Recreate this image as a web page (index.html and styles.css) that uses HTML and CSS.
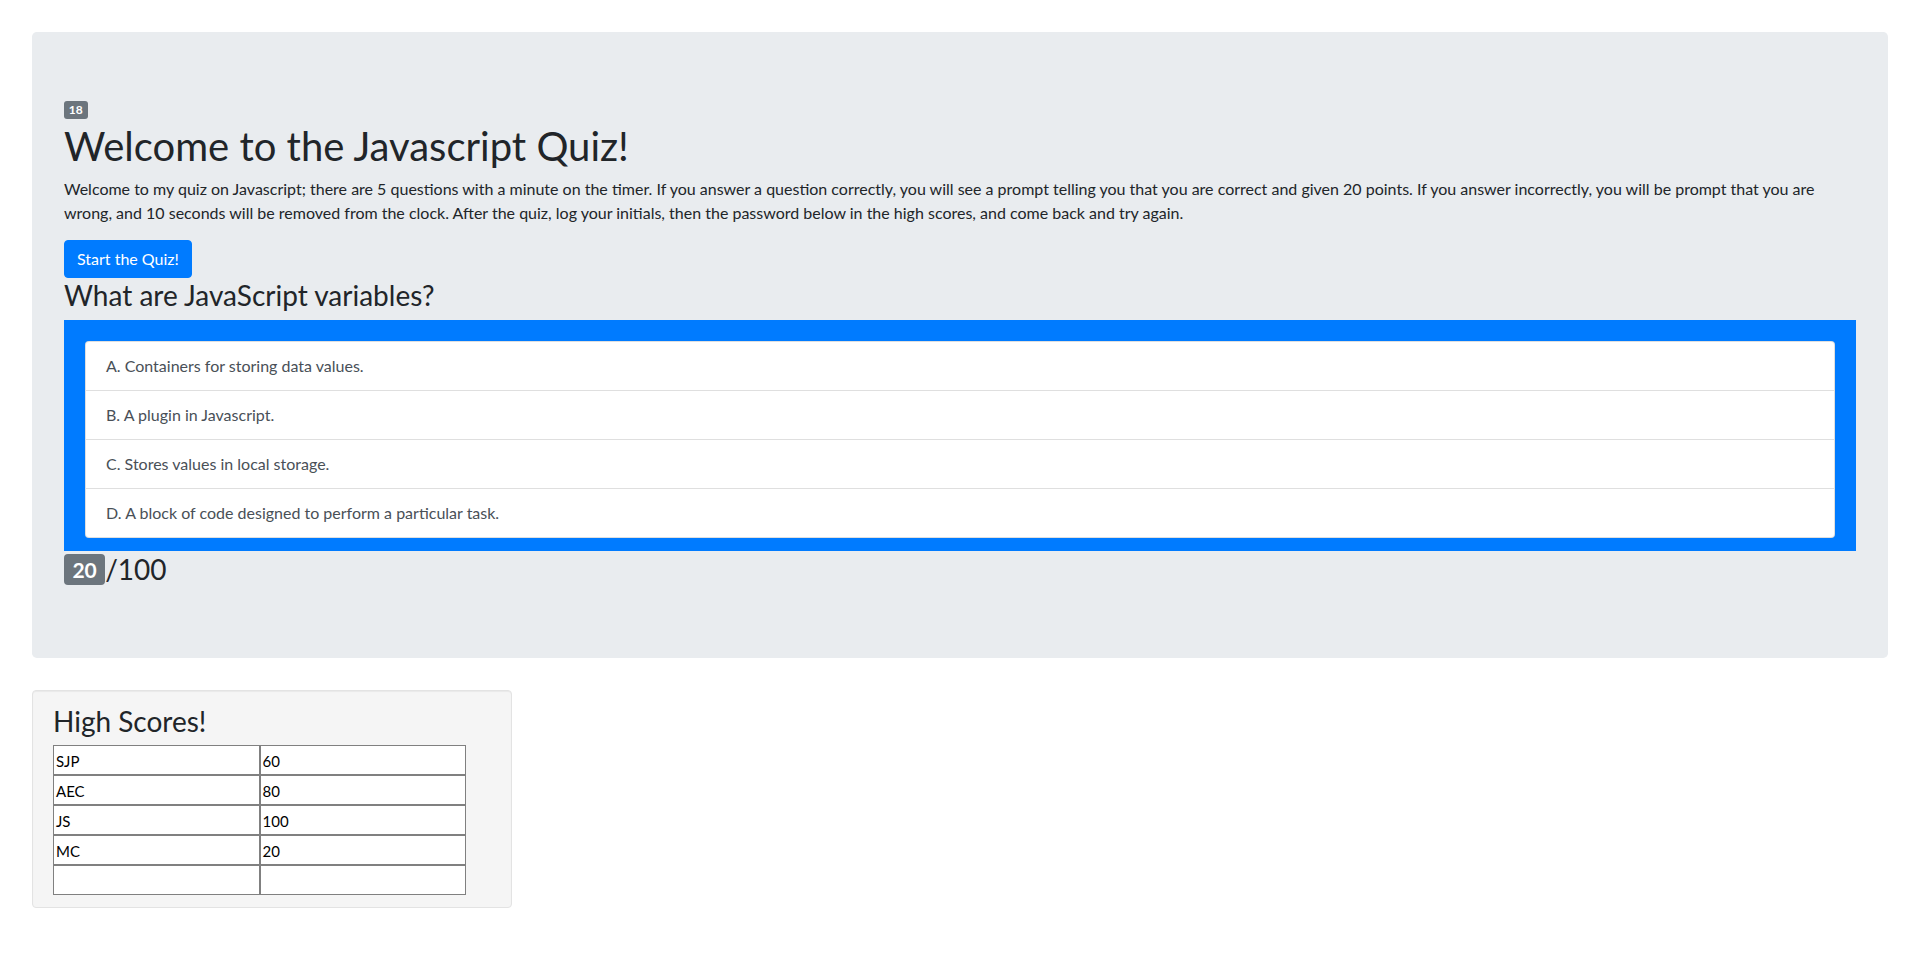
FILE: index.html
```html
<!DOCTYPE html>
<html lang="en">
<head>
<meta charset="utf-8">
<title>Javascript Quiz</title>
<link rel="stylesheet" href="styles.css">
</head>
<body>
<div class="page">
  <div class="jumbotron">
    <div class="timer-line"><span class="badge badge-timer">18</span></div>
    <h1 class="title">Welcome to the Javascript Quiz!</h1>
    <p class="intro">Welcome to my quiz on Javascript; there are 5 questions with a minute on the timer. If you answer a question correctly, you will see a prompt telling you that you are correct and given 20 points. If you answer incorrectly, you will be prompt that you are wrong, and 10 seconds will be removed from the clock. After the quiz, log your initials, then the password below in the high scores, and come back and try again.</p>
    <button class="btn-start" type="button">Start the Quiz!</button>
    <h3 class="question">What are JavaScript variables?</h3>
    <div class="answers">
      <ul class="list-group">
        <li class="list-item">A. Containers for storing data values.</li>
        <li class="list-item">B. A plugin in Javascript.</li>
        <li class="list-item">C. Stores values in local storage.</li>
        <li class="list-item">D. A block of code designed to perform a particular task.</li>
      </ul>
    </div>
    <h3 class="score"><span class="badge badge-score">20</span><span class="score-total">/100</span></h3>
  </div>

  <div class="well">
    <h3 class="well-title">High Scores!</h3>
    <table class="scores">
      <tr><td>SJP</td><td>60</td></tr>
      <tr><td>AEC</td><td>80</td></tr>
      <tr><td>JS</td><td>100</td></tr>
      <tr><td>MC</td><td>20</td></tr>
      <tr><td></td><td></td></tr>
    </table>
  </div>
</div>
</body>
</html>
```
FILE: styles.css
```css
* { box-sizing: border-box; }
html, body { margin: 0; padding: 0; }
body {
  font-family: "Lato", "Open Sans", "Liberation Sans", sans-serif;
  font-size: 16px;
  line-height: 1.5;
  color: #212529;
  background: #fff;
}
.page {
  padding: 32px;
}
.jumbotron {
  background: #e9ecef;
  border-radius: 4.8px;
  padding: 64px 32px;
  margin-bottom: 32px;
}
.timer-line {
  line-height: 24px;
  height: 24px;
}
.badge {
  display: inline-block;
  font-weight: 700;
  line-height: 1;
  text-align: center;
  white-space: nowrap;
  vertical-align: baseline;
  color: #fff;
  background: #6c757d;
  border-radius: 4px;
}
.badge-timer {
  font-size: 12px;
  padding: 3px 4.8px;
  border-radius: 3px;
}
.title {
  margin: 0 0 6px;
  padding-top: 2px;
  font-size: 40px;
  font-weight: 400;
  line-height: 1.2;
}
.intro {
  margin: 0 0 15px;
  padding-top: 1px;
}
.btn-start {
  display: block;
  font-family: inherit;
  font-size: 16px;
  line-height: 24px;
  color: #fff;
  background: #007bff;
  border: 1px solid #007bff;
  border-radius: 4px;
  padding: 6px 12px;
  height: 38px;
  cursor: pointer;
}
.question {
  margin: 0 0 7px;
  padding-top: 1px;
  font-size: 28px;
  font-weight: 400;
  line-height: 1.2;
}
.answers {
  background: #007bff;
  padding: 21px 21px 13px;
}
.list-group {
  list-style: none;
  margin: 0;
  padding: 0;
  display: flex;
  flex-direction: column;
}
.list-item {
  background: #fff;
  color: #495057;
  padding: 12px 20px;
  line-height: 24px;
  border: 1px solid rgba(0, 0, 0, 0.125);
  margin-bottom: -1px;
}
.list-item:first-child {
  border-top-left-radius: 4px;
  border-top-right-radius: 4px;
}
.list-item:last-child {
  margin-bottom: 0;
  border-bottom-left-radius: 4px;
  border-bottom-right-radius: 4px;
}
.score {
  margin: 0 0 8px;
  font-size: 28px;
  font-weight: 400;
  line-height: 1.2;
}
.score-total {
  display: inline-block;
  padding-top: 2px;
  vertical-align: top;
}
.badge-score {
  font-size: 21px;
  padding: 5.25px 8.4px;
  border-radius: 4px;
  vertical-align: top;
  margin-top: 3px;
}
.well {
  width: 480px;
  background: #f5f5f5;
  border: 1px solid #e3e3e3;
  border-radius: 4px;
  box-shadow: inset 0 1px 1px rgba(0, 0, 0, 0.05);
  padding: 13px 20px 12px;
}
.well-title {
  margin: 0 0 6px;
  padding-top: 1px;
  font-size: 28px;
  font-weight: 400;
  line-height: 1.2;
}
.scores {
  width: 413px;
  border-collapse: separate;
  border-spacing: 0;
  background: #fff;
  table-layout: fixed;
}
.scores td {
  width: 50%;
  border: 1px solid #808080;
  height: 30px;
  padding: 3px 2px 0;
  line-height: 25px;
  font-size: 15px;
  color: #000;
  vertical-align: top;
}
```
